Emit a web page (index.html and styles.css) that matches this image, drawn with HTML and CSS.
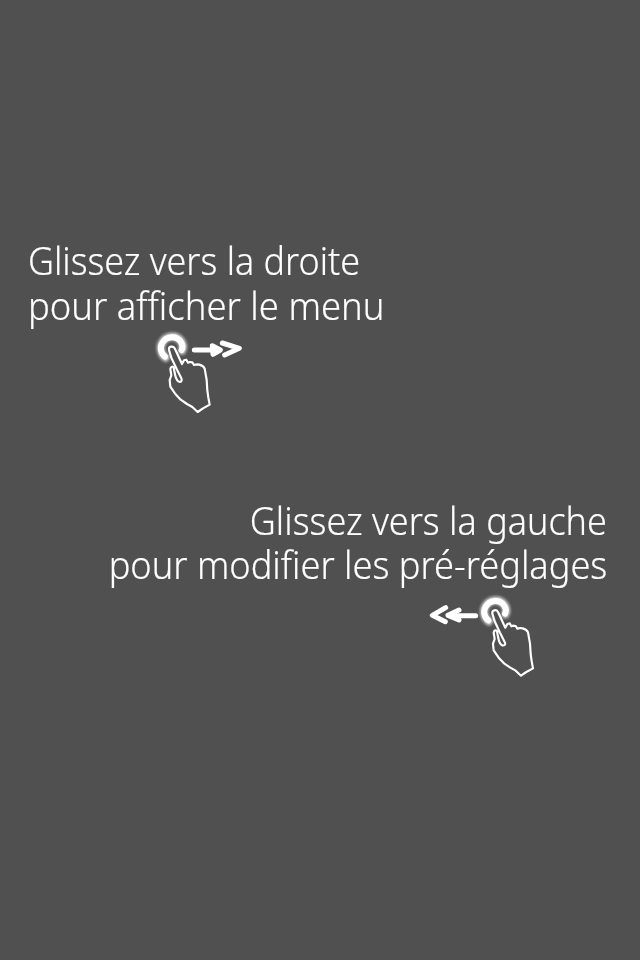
FILE: index.html
```html
<!DOCTYPE html>
<html lang="fr">
<head>
<meta charset="utf-8">
<title>Aide</title>
<link rel="stylesheet" href="styles.css">
</head>
<body>
<main class="help">
  <section class="hint hint-right">
    <p class="text"><span class="line l1">Glissez vers la droite</span><span class="line l2">pour afficher le menu</span></p>
    <svg class="gesture" width="110" height="95" viewBox="0 0 330 285">
      <defs>
        <filter id="glow" x="-30%" y="-30%" width="160%" height="160%"><feGaussianBlur stdDeviation="5"/></filter>
        <g id="hand">
          <path class="halo" d="M62 98C47 87 43 67 52 52C64 31 94 29 108 48C115 58 116 67 111 77"/>
          <path class="ring" d="M60 95C47 85 44 67 52 54C64 33 94 31 107 50C114 60 114 67 110 75"/>
          <path class="outline" d="M111 117L89 70C84 61 70 64 72 75L79 98L95 132L109 160C113 168 107 173 100 169C91 163 91 151 88 138L86 128C84 123 77 124 76 132L79 151L74 165L76 185L91 207L107 224L126 237L142 246L158 261L174 250L194 239L190 218L187 196L185 165L179 131C176 124 171 121 163 119L156 118L147 120L142 112L134 111L129 113L124 104L117 106Z"/>
        </g>
      </defs>
      <use href="#hand"/>
      <g class="arrow"><path d="M148 75H222"/><path class="head" d="M202 62L226 75L204 88Z"/><path d="M232 54L283 70L239 90"/></g>
    </svg>
  </section>
  <section class="hint hint-left">
    <p class="text"><span class="line l3">Glissez vers la gauche</span><span class="line l4">pour modifier les pré-réglages</span></p>
    <svg class="gesture" width="125" height="95" viewBox="0 0 375 285">
      <use href="#hand" x="145" y="-4"/>
      <g class="arrow"><path d="M167 77H92"/><path d="M117 60L84 76L117 90"/><path d="M77 53L37 76L76 95"/></g>
    </svg>
  </section>
</main>
</body>
</html>
```
FILE: styles.css
```css
body { margin: 0; background: #505050; }
.help {
  box-sizing: border-box;
  width: 640px;
  height: 960px;
  padding-top: 238px;
  overflow: hidden;
  color: #fff;
}
.hint { display: flex; flex-direction: column; height: 260px; }
.text {
  margin: 0 0 -2px;
  height: 89px;
  font: 300 39px/44.5px "Noto Sans", "Open Sans", sans-serif;
  white-space: nowrap;
  -webkit-text-stroke: 0.2px #fff;
}
.line { display: block; width: max-content; transform-origin: 0 0; }
.l1 { transform: scaleX(0.92); }
.l2 { transform: scaleX(0.934); }
.l3 { transform: scaleX(0.923); }
.l4 { transform: scaleX(0.928); }
.hint-right .text { padding-left: 28px; }
.hint-left .text { padding-right: 33px; line-height: 44px; }
.hint-left .line { margin-left: auto; transform-origin: 100% 0; }
.gesture { display: block; flex: none; overflow: visible; }
.hint-right .gesture { margin-left: 145px; }
.hint-left .gesture { margin-left: 420px; margin-top: 5px; }
.ring, .halo, .outline, .arrow path { fill: none; stroke: #fff; stroke-linecap: round; stroke-linejoin: round; }
.ring { stroke-width: 18; }
.halo { stroke-width: 23; filter: url(#glow); opacity: .8; }
.outline { stroke-width: 6.5; fill: #505050; }
.arrow path { stroke-width: 15; }
.arrow .head { fill: #fff; }
```
